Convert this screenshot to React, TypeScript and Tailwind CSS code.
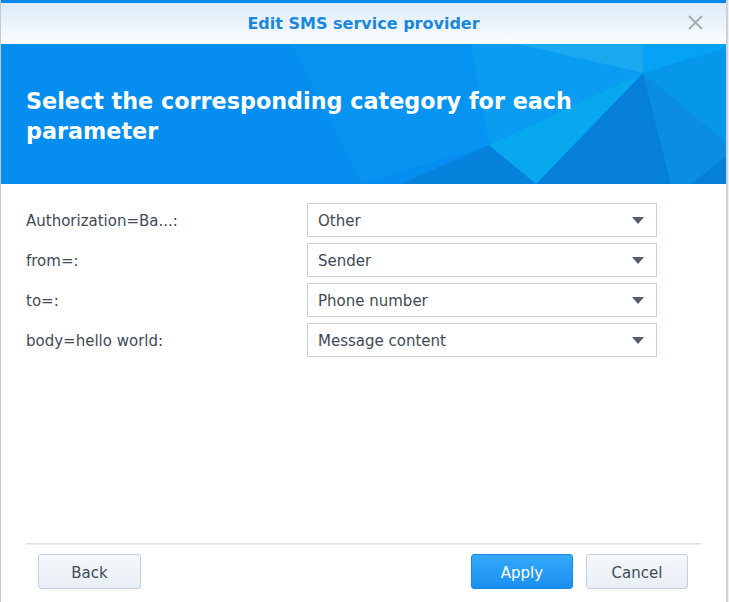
import React from 'react';

const rows = [
  { label: 'Authorization=Ba...:', value: 'Other' },
  { label: 'from=:', value: 'Sender' },
  { label: 'to=:', value: 'Phone number' },
  { label: 'body=hello world:', value: 'Message content' },
];

const font = { fontFamily: '"DejaVu Sans", Verdana, sans-serif' };

const Banner: React.FC = () => (
  <div className="relative h-[140px] bg-[#058ef0] overflow-hidden">
    {/* faceted background */}
    <svg className="absolute inset-0" width="726" height="140" viewBox="0 0 726 140">
      <polygon points="290,0 470,0 488,101 360,140" fill="#0693f2" />
      <polygon points="470,0 516,0 642,29 488,101" fill="#099cf1" />
      <polygon points="516,0 642,0 642,29" fill="#1aa8f1" />
      <polygon points="642,0 726,0 726,4 642,29" fill="#05a3f5" />
      <polygon points="642,29 726,4 726,100" fill="#0797ea" />
      <polygon points="488,101 642,29 600,80 540,140 420,140" fill="#08a8ef" />
      <polygon points="642,29 535,140 670,140" fill="#067fdb" />
      <polygon points="642,29 670,140 726,140 726,100" fill="#0a8de3" />
      <polygon points="488,101 535,140 400,140" fill="#0682dd" />
      <polygon points="726,112 726,140 690,140" fill="#067fd9" />
    </svg>
    <h1 className="relative pt-[42px] pl-[25px] pr-6 text-white font-bold text-[22.3px] leading-[30px]" style={font}>
      Select the corresponding category for each
      <br />
      parameter
    </h1>
  </div>
);

const Select: React.FC<{ value: string }> = ({ value }) => (
  <div className="w-[350px] h-[34px] border border-[#c8d2dc] bg-white flex items-center justify-between pl-[10px] pr-[12px]">
    <span className="text-[15px] text-[#414b55] pt-[2px]" style={font}>{value}</span>
    <svg width="12" height="7" viewBox="0 0 12 7">
      <polygon points="0,0 12,0 6,7" fill="#555e69" />
    </svg>
  </div>
);

export default function App() {
  return (
    <div className="w-[729px] h-[602px] bg-[#eef0f2] overflow-hidden">
      <div className="w-[728px] h-[602px] bg-white border-l border-[#c6c9cc] border-r-2 border-r-[#cfd2d5] flex flex-col">
        <div className="h-[3px] bg-[#0688ea]" />
        <div className="h-[41px] bg-gradient-to-b from-[#dcebf8] to-[#fbfdff] flex items-center justify-center relative">
          <span className="text-[#1a87dc] font-bold text-[16px] pt-[1px]" style={font}>Edit SMS service provider</span>
          <svg className="absolute right-[23px] top-[12px]" width="15" height="15" viewBox="0 0 15 15">
            <path d="M1 1 L14 14 M14 1 L1 14" stroke="#a8adb2" strokeWidth="2" />
          </svg>
        </div>
        <Banner />
        <div className="flex-1 flex flex-col px-[25px] pt-[19px]">
          <div className="flex flex-col gap-[6px]">
            {rows.map((r) => (
              <div key={r.label} className="flex items-center h-[34px]">
                <span className="w-[281px] text-[15px] text-[#414b55] pt-[2px]" style={font}>{r.label}</span>
                <Select value={r.value} />
              </div>
            ))}
          </div>
          <div className="flex-1" />
          <div className="h-[2px] bg-gradient-to-b from-[#d9dcdf] to-[#f1f2f3]" />
          <div className="flex items-center justify-between pl-[12px] pr-[13px] pt-[9px] pb-[13px]">
            <button className="w-[103px] h-[35px] pt-[3px] rounded-[3px] border border-[#c5d0dc] bg-gradient-to-b from-[#f6f9fc] to-[#e8eef4] text-[15px] text-[#414b55]" style={font}>Back</button>
            <div className="flex gap-[13px]">
              <button className="w-[102px] h-[35px] pt-[3px] rounded-[3px] border border-[#1a86e0] bg-gradient-to-b from-[#33a9fb] to-[#1b8ff0] text-[15px] text-white" style={font}>Apply</button>
              <button className="w-[102px] h-[35px] pt-[3px] rounded-[3px] border border-[#c5d0dc] bg-gradient-to-b from-[#f6f9fc] to-[#e8eef4] text-[15px] text-[#414b55]" style={font}>Cancel</button>
            </div>
          </div>
        </div>
      </div>
    </div>
  );
}
